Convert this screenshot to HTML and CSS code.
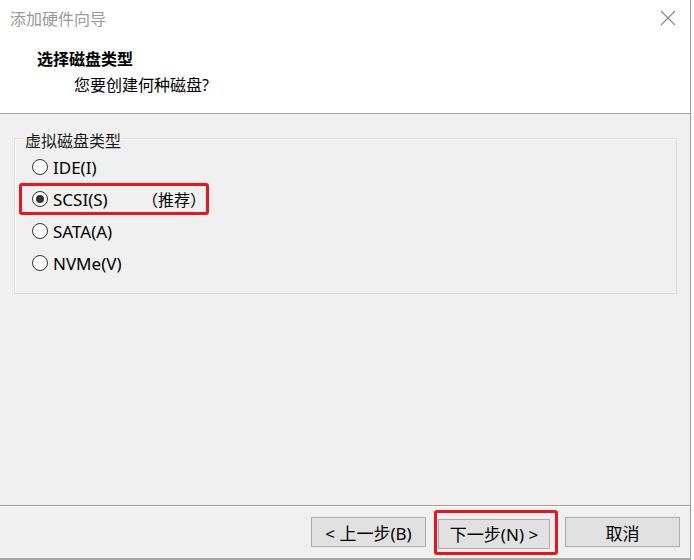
FILE: index.html
```html
<!DOCTYPE html>
<html>
<head>
  <meta charset="UTF-8">
  <title>添加硬件向导</title>
  <link rel="stylesheet" href="styles.css">
</head>
<body>
  <div class="dialog">
    <div class="header">
      <div class="titlebar">
        <span class="title">添加硬件向导</span>
        <svg class="close" width="16" height="16" viewBox="0 0 16 16">
          <path d="M1 1 L15 15 M15 1 L1 15" stroke="#8a8a8a" stroke-width="1.2" fill="none"/>
        </svg>
      </div>
      <div class="heading">选择磁盘类型</div>
      <div class="subtitle">您要创建何种磁盘?</div>
    </div>

    <div class="content">
      <fieldset class="group">
        <legend>虚拟磁盘类型</legend>
        <div class="options">
          <div class="option">
            <span class="radio"></span>
            <span class="label">IDE(I)</span>
          </div>
          <div class="option highlight">
            <span class="radio checked"></span>
            <span class="label">SCSI(S)</span>
            <span class="hint">（推荐）</span>
          </div>
          <div class="option">
            <span class="radio"></span>
            <span class="label">SATA(A)</span>
          </div>
          <div class="option">
            <span class="radio"></span>
            <span class="label">NVMe(V)</span>
          </div>
        </div>
      </fieldset>
    </div>

    <div class="footer">
      <button class="btn">&lt; 上一步(B)</button>
      <div class="btn-mark">
        <button class="btn next">下一步(N) &gt;</button>
      </div>
      <button class="btn">取消</button>
    </div>
  </div>
</body>
</html>
```

FILE: styles.css
```css
body {
  margin: 0;
  background: #fff;
  font-family: "Noto Sans", "Noto Sans CJK SC", sans-serif;
  font-size: 16px;
  color: #000;
}
.dialog {
  width: 690px;
  height: 558px;
  border-right: 1px solid #9c9c9c;
  border-bottom: 2px solid #a8a8a8;
  display: flex;
  flex-direction: column;
}
.header {
  height: 113px;
  background: #fff;
  border-bottom: 1px solid #a0a0a0;
  box-shadow: 0 1px 0 #fff;
}
.titlebar {
  height: 36px;
  display: flex;
  align-items: center;
  justify-content: space-between;
  padding: 0 14px 0 10px;
}
.title {
  color: #9a9a9a;
  font-size: 16px;
}
.heading {
  margin-top: 11px;
  padding-left: 37px;
  font-weight: bold;
  line-height: 24px;
}
.subtitle {
  margin-top: 2px;
  padding-left: 74px;
  line-height: 24px;
}
.content {
  flex: 1;
  background: #f0f0f0;
  padding-top: 13px;
  border-bottom: 1px solid #a0a0a0;
}
.group {
  margin: 0 13px 0 14px;
  padding: 0 0 14px 0;
  border: 1px solid #dcdcdc;
  box-shadow: inset 1px 1px 0 #fff;
}
.group legend {
  margin-left: 9px;
  padding: 6px 2px 0 1px;
  line-height: 16px;
  color: #1a1a1a;
}
.options {
  margin-top: 2px;
  padding-left: 4px;
}
.option {
  box-sizing: border-box;
  height: 32px;
  display: flex;
  align-items: center;
  padding-left: 13px;
  width: fit-content;
}
.option .label {
  font-size: 17px;
}
.option.highlight {
  width: 190px;
  padding-left: 10px;
  border: 3px solid #e8161c;
  border-radius: 3px;
}
.hint {
  margin-left: auto;
}
.radio {
  box-sizing: border-box;
  width: 16px;
  height: 16px;
  border: 1px solid #333;
  border-radius: 50%;
  background: #fff;
  margin-right: 5px;
  display: flex;
  align-items: center;
  justify-content: center;
}
.radio.checked:after {
  content: "";
  width: 8px;
  height: 8px;
  border-radius: 50%;
  background: #333;
}
.footer {
  height: 52px;
  background: #f0f0f0;
  box-shadow: inset 0 1px 0 #fff;
  display: flex;
  align-items: center;
  justify-content: flex-end;
  padding-right: 10px;
}
.btn {
  box-sizing: border-box;
  width: 115px;
  height: 30px;
  background: #e1e1e1;
  border: 1px solid #adadad;
  font-family: inherit;
  font-size: 17px;
  color: #000;
  padding: 0;
}
.btn-mark {
  margin: 0 7px 0 8px;
  border: 3px solid #e8161c;
  border-radius: 3px;
  padding: 6px 5px 3px 1px;
  display: flex;
}
.btn.next {
  width: 112px;
}
```
